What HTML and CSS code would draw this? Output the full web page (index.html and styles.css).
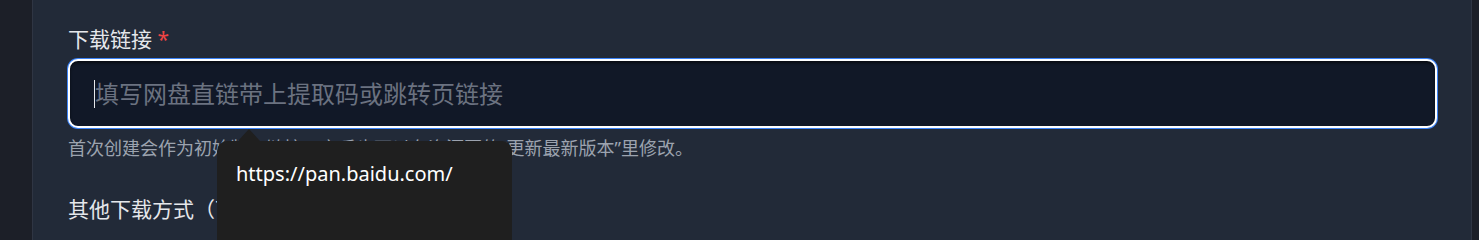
FILE: index.html
```html
<!DOCTYPE html>
<html lang="zh-CN">
<head>
<meta charset="utf-8">
<title>下载链接</title>
<link rel="stylesheet" href="styles.css">
</head>
<body>
<div class="app">
  <div class="side"></div>
  <main class="panel">
    <div class="field">
      <label class="label">下载链接 <span class="req">*</span></label>
      <div class="input"><span class="caret"></span><span class="placeholder">填写网盘直链带上提取码或跳转页链接</span></div>
      <p class="help">首次创建会作为初始版本链接，之后也可以在资源页的“更新最新版本”里修改。</p>
      <div class="tooltip">https://pan.baidu.com/</div>
    </div>
    <div class="field next">
      <label class="label">其他下载方式（可选）</label>
    </div>
  </main>
  <div class="side-right"></div>
</div>
</body>
</html>
```

FILE: styles.css
```css
html, body {
  margin: 0;
  padding: 0;
  background: #1c1f28;
  font-family: "Noto Sans", "Noto Sans CJK SC", sans-serif;
}

.app {
  display: flex;
  min-height: 100vh;
}

.side {
  width: 32px;
  flex: none;
  background: #1c1f28;
}

.side-right {
  width: 7px;
  flex: none;
  background: #1c1f28;
}

.panel {
  flex: 1;
  background: #222a38;
  border-left: 1px solid #2f3543;
  border-right: 1px solid #2f3543;
  padding: 25px 34px 10px 35px;
}

.field {
  position: relative;
}

.label {
  display: block;
  font-size: 21px;
  line-height: 28px;
  color: #e5e7eb;
}

.req {
  color: #ef4444;
}

.input {
  margin-top: 6px;
  height: 69px;
  box-sizing: border-box;
  border: 2px solid #ffffff;
  border-radius: 10px;
  background: #111827;
  box-shadow: 0 0 0 1px #3b82f6, inset 0 2px 3px rgba(0, 0, 0, 0.55);
  display: flex;
  align-items: center;
  padding-left: 24px;
}

.caret {
  width: 1px;
  height: 28px;
  background: #e5e7eb;
  flex: none;
}

.placeholder {
  font-size: 24px;
  color: #6b7280;
  line-height: 32px;
}

.help {
  margin: 7px 0 0;
  font-size: 18px;
  line-height: 26px;
  color: #9ca3af;
}

.tooltip {
  position: absolute;
  left: 149px;
  top: 116px;
  width: 295px;
  height: 120px;
  box-sizing: border-box;
  padding: 18px 0 0 19px;
  background: #1f1f1f;
  border-radius: 10px;
  color: #ffffff;
  font-size: 20px;
  line-height: 30px;
  z-index: 2;
}

.tooltip::before {
  content: "";
  position: absolute;
  left: 21px;
  top: -12px;
  border-left: 11px solid transparent;
  border-right: 11px solid transparent;
  border-bottom: 12px solid #1f1f1f;
}

.next {
  margin-top: 34px;
}
```
